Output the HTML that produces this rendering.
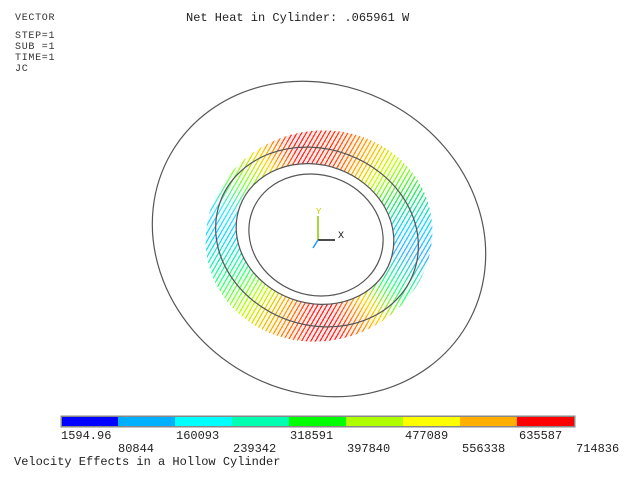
<!DOCTYPE html>
<html><head><style>
body{margin:0;width:624px;height:477px;background:#fff;position:relative;overflow:hidden;font-family:"Liberation Mono",monospace;color:#222}
.t{position:absolute;white-space:pre;line-height:1}
.s{font-size:10px;letter-spacing:0.7px;color:#333}
.m{font-size:12px}
#ring{position:absolute;left:205px;top:131px;width:228px;height:210px;border-radius:50%;
background:conic-gradient(from 0deg,#ff2020 0deg,#ff3a10 25deg,#ffb000 45deg,#c8ff00 60deg,#30e060 80deg,#20d0ff 100deg,#40b0ff 115deg,#30ff80 140deg,#ffd000 160deg,#ff2020 185deg,#ff2020 200deg,#ffa000 220deg,#c0ff00 240deg,#30ff80 260deg,#20d0ff 285deg,#40e0ff 300deg,#80ff40 320deg,#ffd000 340deg,#ff2020 360deg);transform:rotate(-15deg)}
#hatch{position:absolute;left:200px;top:126px;width:238px;height:220px;border-radius:50%;
background:repeating-linear-gradient(-60deg,rgba(255,255,255,0) 0 1.2px,rgba(255,255,255,.9) 1.2px 4px)}
</style></head><body>
<div class="t s" style="left:15px;top:14px">VECTOR</div>
<div class="t s" style="left:15px;top:32px">STEP=1</div>
<div class="t s" style="left:15px;top:43px">SUB =1</div>
<div class="t s" style="left:15px;top:54px">TIME=1</div>
<div class="t s" style="left:15px;top:65px">JC</div>
<div class="t m" style="left:186px;top:12px">Net Heat in Cylinder: .065961 W</div>
<div id="ring"></div><div id="hatch"></div>
<svg style="position:absolute;left:0;top:0" width="624" height="477">
<g fill="none" stroke="#555" stroke-width="1.2">
<ellipse cx="0" cy="0" rx="80" ry="69" transform="translate(315,234) rotate(20)" fill="#fff"/>
<ellipse cx="0" cy="0" rx="68" ry="60" transform="translate(316,235) rotate(20)"/>
<ellipse cx="0" cy="0" rx="103" ry="88" transform="translate(317,237) rotate(20)"/>
<ellipse cx="0" cy="0" rx="171" ry="153" transform="translate(319,239) rotate(30)"/>
</g>
<g stroke-width="1.5"><line x1="318" y1="240" x2="318" y2="216" stroke="#8c0"/><line x1="318" y1="240" x2="335" y2="240" stroke="#111"/><line x1="318" y1="240" x2="313" y2="248" stroke="#29f"/></g>
<text x="316" y="214" font-size="9" fill="#cc0" font-family="Liberation Mono">Y</text>
<text x="338" y="238" font-size="10" fill="#111" font-family="Liberation Mono">X</text>
<rect x="60.5" y="415.5" width="515" height="12" fill="#888"/>
<g>
<rect x="62" y="417" width="56" height="9" fill="#0000ff"/>
<rect x="118" y="417" width="57" height="9" fill="#00b0ff"/>
<rect x="175" y="417" width="57" height="9" fill="#00ffff"/>
<rect x="232" y="417" width="57" height="9" fill="#00ffb0"/>
<rect x="289" y="417" width="57" height="9" fill="#00ff00"/>
<rect x="346" y="417" width="57" height="9" fill="#b0ff00"/>
<rect x="403" y="417" width="57" height="9" fill="#ffff00"/>
<rect x="460" y="417" width="57" height="9" fill="#ffb000"/>
<rect x="517" y="417" width="57" height="9" fill="#ff0000"/>
</g>
</svg>
<div class="t m" style="left:61px;top:430px">1594.96</div>
<div class="t m" style="left:176px;top:430px">160093</div>
<div class="t m" style="left:290px;top:430px">318591</div>
<div class="t m" style="left:405px;top:430px">477089</div>
<div class="t m" style="left:519px;top:430px">635587</div>
<div class="t m" style="left:118px;top:443px">80844</div>
<div class="t m" style="left:233px;top:443px">239342</div>
<div class="t m" style="left:347px;top:443px">397840</div>
<div class="t m" style="left:462px;top:443px">556338</div>
<div class="t m" style="left:576px;top:443px">714836</div>
<div class="t m" style="left:14px;top:456px">Velocity Effects in a Hollow Cylinder</div>
</body></html>
